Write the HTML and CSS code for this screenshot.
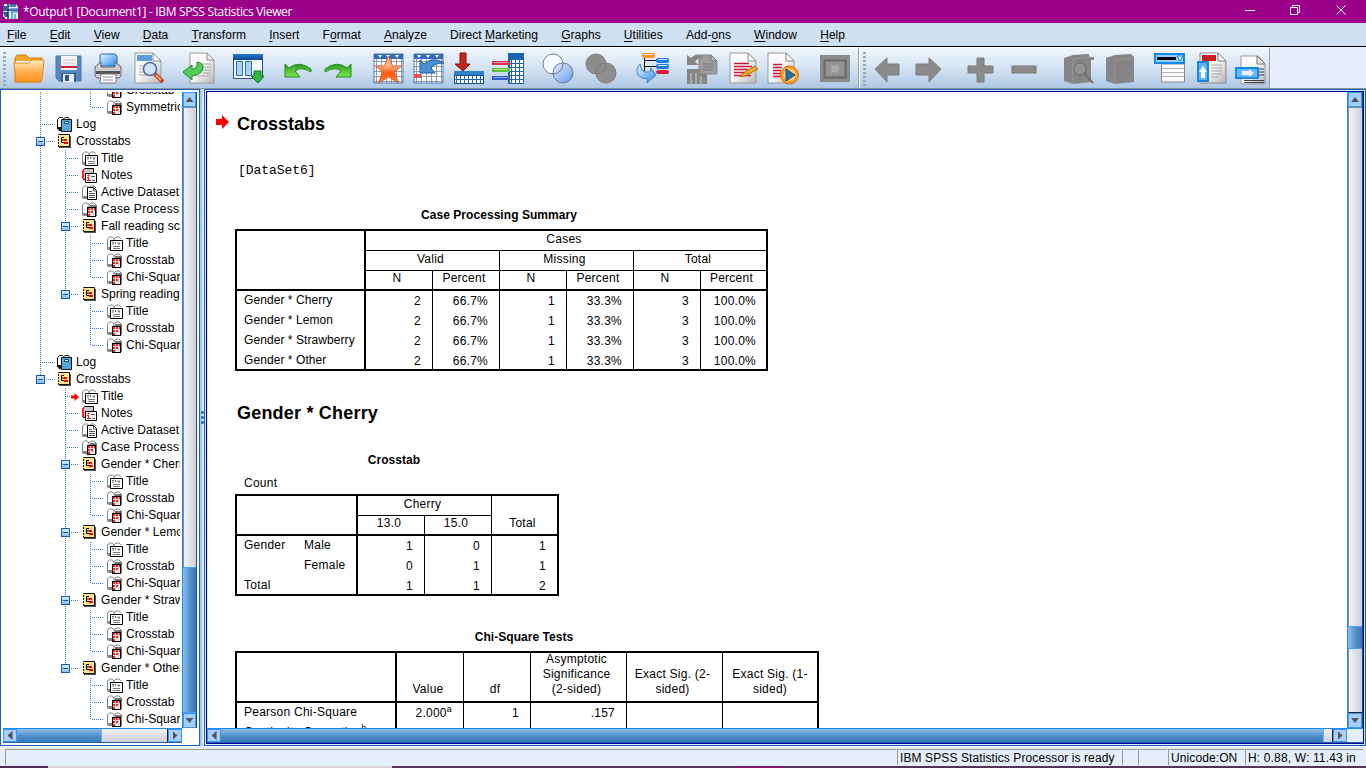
FILE: index.html
```html
<!DOCTYPE html>
<html lang="en">
<head>
<meta charset="utf-8">
<title>*Output1 [Document1] - IBM SPSS Statistics Viewer</title>
<link rel="stylesheet" href="styles.css">
</head>
<body>
<svg class="defs" width="0" height="0" aria-hidden="true">
  <defs>
    <linearGradient id="gOrange" x2="0" y2="1"><stop offset="0" stop-color="#fff0c8"/><stop offset=".5" stop-color="#ffb050"/><stop offset="1" stop-color="#ff9420"/></linearGradient>
    <linearGradient id="gBlue" x2="0" y2="1"><stop offset="0" stop-color="#2a78cc"/><stop offset="1" stop-color="#0c4a98"/></linearGradient>
    <linearGradient id="gSky" x2="1" y2="1"><stop offset="0" stop-color="#e8f6ff"/><stop offset="1" stop-color="#2a8cf0"/></linearGradient>
    <linearGradient id="gPaper" x2="1" y2="1"><stop offset="0" stop-color="#fff"/><stop offset=".5" stop-color="#f6f6f6"/><stop offset="1" stop-color="#b4b4b4"/></linearGradient>
    <linearGradient id="gGreen" x2="0" y2="1"><stop offset="0" stop-color="#2f9a20"/><stop offset="1" stop-color="#7ce850"/></linearGradient>
    <linearGradient id="gStar" x2="0" y2="1"><stop offset="0" stop-color="#ffd8b8"/><stop offset=".45" stop-color="#ffa070"/><stop offset=".6" stop-color="#ff5a10"/><stop offset="1" stop-color="#ff8030"/></linearGradient>
    <linearGradient id="gVenn" x2="1" y2="1"><stop offset="0" stop-color="#e6efff"/><stop offset="1" stop-color="#5f95ee"/></linearGradient>
    <pattern id="cells" width="5" height="5" patternUnits="userSpaceOnUse"><rect width="5" height="5" fill="#8f9aab"/><rect width="4" height="4" fill="#fff"/></pattern>
    <pattern id="cellsBlue" width="4" height="4" patternUnits="userSpaceOnUse"><rect width="4" height="4" fill="#1b66ae"/><rect width="3" height="3" fill="#fff"/></pattern>
    <symbol id="t-book" viewBox="0 0 17 17"><path d="M1 14V4l2-2h4l1 1 1-1h4l2 2v10H1z" fill="#fff"/><path d="M1.500 14V4l2-2h3l1.500 2v10M8 4l2-2h3l2 2M1 14h7" fill="none" stroke="#858585"/><path d="M1 12h6v3H3z" fill="#858585"/></symbol>
    <symbol id="i-title" viewBox="0 0 17 17"><use href="#t-book"/><path d="M4.500 5.500h12v10h-12z" fill="#fff" stroke="#000"/><path d="M6 7.500h2M7 8v2M9.500 7v2M11 8.500l1-1 1 2 1-2M7 11.500h7M7 13.500h7" stroke="#777" fill="none"/></symbol>
    <symbol id="i-table" viewBox="0 0 17 17"><use href="#t-book"/><path d="M9 4h7v11H9z" fill="#777"/><path d="M6 6h9v10H6z" fill="#000"/><path d="M7 7h7v8H7z" fill="#d8d8d8"/><path d="M7 7h2v2H7zM10 7h2v2h-2zM13 7h1v2h-1zM7 10h2v2H7zM7 13h2v2H7zM10 10h2v2h-2z" fill="#ff2020"/><path d="M10 13h2v2h-2zM13 10h1v2h-1zM13 13h1v2h-1z" fill="#fff"/></symbol>
    <symbol id="i-notes" viewBox="0 0 17 17"><path d="M2.500 12.500V2.500l1-1h9v10z" fill="#c8c8c8" stroke="#000"/><path d="M1 3h2v9H1z" fill="#f22"/><path d="M4.500 6.500h11v9h-11z" fill="#fff" stroke="#000"/><path d="M7 8h1v1H7zM6 10.500h1.500V13M6 13.500h4" stroke="red" fill="none"/><path d="M10 9.500h4M11 13.500h3" stroke="#555"/></symbol>
    <symbol id="i-data" viewBox="0 0 17 17"><use href="#t-book"/><path d="M6.500 3.500h6l3 3v9h-9z" fill="#fff" stroke="#000"/><path d="M12.500 4v3h3M8 7.500h3M8 9.500h6M8 11.500h6M8 13.500h6" stroke="#555" fill="none"/></symbol>
    <symbol id="i-log" viewBox="0 0 17 17"><path d="M1.500 13V3.500l2-2h3l1 1 2-1h3l1 2" fill="#fff" stroke="#111"/><path d="M1 11h4v4H3z" fill="#111"/><path d="M5.500 3.500h10v12h-10z" fill="#55a8dc" stroke="#111"/><path d="M8.500 5.500h4v2h-4z" fill="#fff" stroke="#124b80"/></symbol>
    <symbol id="i-out" viewBox="0 0 17 17"><path d="M3 3h12v12H3z" fill="#555"/><path d="M2.500 1.500h11v12h-11z" fill="#ffe48c" stroke="#111"/><path d="M2 2v12" stroke="#fff3c0" stroke-dasharray="1 2" stroke-width="2"/><path d="M8 4.500H5.500v5H8M6 7h2" stroke="#000" fill="none"/><path d="M8 6h3v2H8zM8 9h4v2H8z" fill="red"/></symbol>
    <symbol id="page" viewBox="0 0 34 34"><path d="M1 1h18l8 8v22H1z" fill="url(#gPaper)" stroke="#9a9a9a"/><path d="M19 1v8h8z" fill="#fff" stroke="#888"/></symbol>
  </defs>
</svg>

<header class="titlebar">
  <svg class="app" viewBox="0 0 17 17"><path d="M2 1h12l2 3v12H4L1 13z" fill="#e8f4fa"/><path d="M1 3h4v3H1zM1 9h5v5H3zM8 1h6v3H8z" fill="#315b99"/><path d="M6 1v15M1 7h15" stroke="#123668" stroke-width="1.500"/><path d="M8 6h8M9 9h7M10 9v7M13 11v5M7 3h7" stroke="#4e91c2" stroke-width="1.500"/></svg>
  <span class="caption">*Output1 [Document1] - IBM SPSS Statistics Viewer</span>
  <svg class="winbtns" viewBox="0 0 130 23"><g fill="none" stroke="#fff"><path d="M9 10.500h10M54.500 7.500h7v7h-7zM56.500 7V5.500h7v7H62M100.500 5.500l9 9M109.500 5.500l-9 9"/></g></svg>
</header>

<nav class="menubar"><span><u>F</u>ile</span><span><u>E</u>dit</span><span><u>V</u>iew</span><span><u>D</u>ata</span><span><u>T</u>ransform</span><span><u>I</u>nsert</span><span>F<u>o</u>rmat</span><span><u>A</u>nalyze</span><span>Direct <u>M</u>arketing</span><span><u>G</u>raphs</span><span><u>U</u>tilities</span><span>Add-<u>o</u>ns</span><span><u>W</u>indow</span><span><u>H</u>elp</span></nav>

<div class="toolbars">
  <div class="bar main">
    <svg viewBox="0 0 34 34"><path d="M3 30V6l2-3h9l3 3h13v5l-1 19z" fill="#f5a524" stroke="#c98012"/><path d="M4 9h25v5H4z" fill="#fff"/><path d="M2 11h15l3-3h12l-2 20-3 2H4z" fill="url(#gOrange)" stroke="#e08820"/></svg>
    <svg viewBox="0 0 34 34"><path d="M2 4h25v25H5l-3-3z" fill="#5488be" stroke="#4478b0"/><path d="M7 4h16v14H7z" fill="#f2f2f4"/><path d="M7 14h16v2H7z" fill="#d0203c"/><path d="M9 8h12M9 11h12" stroke="#c8c8c8"/><path d="M7 21h15v9H7z" fill="#2f6099"/><path d="M9 22h11v8H9z" fill="#eee"/><path d="M11 23h4v6h-4z" fill="#24589a"/></svg>
    <svg viewBox="0 0 34 34"><path d="M8 2h14l2 2v10H7V3z" fill="url(#gSky)" stroke="#236bb5"/><path d="M4 13l4-3v5h14v-5l4 3 2 2v9l-2 2H4l-2-2v-9z" fill="#cfcfcf" stroke="#666"/><path d="M3 19h24v3H3z" fill="#555"/><path d="M8 22h15v9H7z" fill="#fff" stroke="#777"/><path d="M10 25h10M10 28h10" stroke="#88b"/></svg>
    <svg viewBox="0 0 34 34"><use href="#page"/><path d="M3 3h15v6H3z" fill="#5a9de0"/><path d="M5 14h7M5 17h5M5 20h5M5 23h7" stroke="#aaa"/><path d="M21 22l8 8" stroke="#b34a18" stroke-width="4"/><path d="M22 23l5 5" stroke="#ff9a70" stroke-width="2"/><circle cx="16" cy="17" r="6.500" fill="#cfe2ff" fill-opacity=".9" stroke="#5068a8" stroke-width="1.500"/></svg>
    <svg viewBox="0 0 34 34"><path d="M8 1h17l7 7v23H8z" fill="url(#gPaper)" stroke="#9a9a9a"/><path d="M25 1v7h7z" fill="#fff" stroke="#888"/><path d="M20 12h9M20 15h9M20 18h9M20 21h9M15 24h13" stroke="#aaa"/><path d="M1 20l9-7v4q6 0 5-7 6 1 6 5-1 8-11 9v4z" fill="#55cc58" stroke="#178a2c"/></svg>
    <svg viewBox="0 0 34 34"><path d="M1.500 2.500h29v24h-29z" fill="#f5faff" stroke="#2b4d88"/><path d="M1 2h30v6H1z" fill="url(#gBlue)"/><path d="M4.500 9.500h6v14h-6zM13.500 9.500h6v14h-6z" fill="#a8d4fa" stroke="#2a6fb4"/><path d="M22 19h7v5h3l-6 7-7-7h3z" fill="#2eb838" stroke="#0d7820"/></svg>
    <svg viewBox="0 0 34 34"><path d="M2 12l4 4q10-8 22 1v3q-10-6-16-1l5 6H2z" fill="url(#gGreen)" stroke="#218c26"/></svg>
    <svg viewBox="0 0 34 34"><path d="M27 12l-4 4Q13 8 1 17v3q10-6 16-1l-5 6h15z" fill="url(#gGreen)" stroke="#218c26"/></svg>
    <svg viewBox="0 0 34 34"><path d="M2 2h29v29H2z" fill="url(#cells)" stroke="#527fc0"/><path d="M2 2h29v5H2z" fill="#3269c2"/><path d="M6 3l2 3 2-3M14 3l2 3 2-3M23 3l2 3 2-3" fill="#fff"/><path d="M16.500 4l4 10h9l-7 6 4 11-10-6-10 6 4-11-7-6h9z" fill="url(#gStar)" stroke="#d96524"/></svg>
    <svg viewBox="0 0 34 34"><path d="M2 2h29v29H2z" fill="url(#cells)" stroke="#527fc0"/><path d="M2 2h29v5H2z" fill="#3269c2"/><path d="M5 3l2 3 2-3M14 3l2 3 2-3M23 3l2 3 2-3" fill="#fff"/><path d="M2 22h7v4H2z" fill="#f24b54"/><path d="M8 8l4 4q9-8 20-1-10 0-13 5l4 5H8z" fill="#488ed4" stroke="#235c9e"/></svg>
    <svg viewBox="0 0 34 34"><path d="M1 19h30v13H1z" fill="#174e92"/><path d="M2 24h28v7H2z" fill="url(#cellsBlue)"/><path d="M1 19h30v4H1z" fill="#2f81cc"/><path d="M7 1h6v11h4L10 19l-8-7h5z" fill="#c8241c" stroke="#7c1010"/></svg>
    <svg viewBox="0 0 34 34"><path d="M16 1h16v31H16z" fill="#1b62b0"/><path d="M18 7h13v24H18z" fill="url(#cellsBlue)"/><path d="M0 9h18v4H0z" fill="#d83252"/><path d="M0 16h18v4H0z" fill="#5fc436"/><path d="M0 24h18v4H0z" fill="#315dd0"/><path d="M2 10.500h14M2 17.500h14M2 25.500h14" stroke="#fff" stroke-opacity=".45"/></svg>
    <svg viewBox="0 0 34 34"><circle cx="12" cy="12" r="10" fill="#f4f9ff" stroke="#7a8290"/><circle cx="22" cy="21" r="10" fill="url(#gVenn)" fill-opacity=".9" stroke="#6878a0"/><path d="M12 22a10 10 0 0 0 10-10" fill="none" stroke="#6878a0"/></svg>
    <svg viewBox="0 0 34 34"><circle cx="12" cy="12" r="10" fill="#8c8c8c" stroke="#808080"/><circle cx="22" cy="21" r="10" fill="#8e8e8e" stroke="#7b7b7b"/><path d="M22 12a10 10 0 0 1-10 10" fill="none" stroke="#777"/></svg>
    <svg viewBox="0 0 34 34"><path d="M8.500 5v14M8 8.500h13M8 14.500h13" stroke="#111" fill="none"/><rect x="6" y="1" width="13" height="5" rx="2" fill="#ff9520"/><rect x="20" y="6" width="13" height="5" rx="2" fill="#1c7cf0"/><rect x="20" y="12" width="13" height="5" rx="2" fill="#1c7cf0"/><rect x="20" y="18" width="13" height="4" rx="2" fill="#dc1c3c"/><path d="M8 2.500h9M22 7.500h9M22 13.500h9" stroke="#cfe4ff"/><path d="M4 12Q-1 18 2 23q3 4 10 4l-1 4 9-8-5-7-1 4q-6 1-8-2-1-2-2-6z" fill="url(#gSky)" stroke="#3a84d2"/></svg>
    <svg viewBox="0 0 34 34"><path d="M14 3h12l6 6v13H14z" fill="#9d9d9d" stroke="#888"/><path d="M26 3v6h6z" fill="#b8b8b8" stroke="#777"/><path d="M18 12h10M18 15h10M18 18h10" stroke="#747474"/><path d="M2 3l4 3q7-7 12 0-6 0-8 4l4 3H2z" fill="#858585"/><path d="M2 17h13v5h7v10H2z" fill="#858585"/><path d="M6 21v11M11 21v11M16 24v8" stroke="#aaa" stroke-width="2"/></svg>
    <svg viewBox="0 0 34 34"><use href="#page"/><path d="M5 11.500h15M5 14.500h18M5 17.500h14M5 20.500h12M5 23.500h17" stroke="#d41435" stroke-width="1.500"/><path d="M13 22l13-8 3 3-13 7-5 1z" fill="#ffac25" stroke="#b06d14"/></svg>
    <svg viewBox="0 0 34 34"><use href="#page"/><path d="M6 12.500h9M6 15.500h9M6 18.500h8M6 21.500h8M6 24.500h8" stroke="#d41435" stroke-width="1.500"/><circle cx="22.500" cy="23" r="9" fill="#ff9d24" stroke="#c37418"/><circle cx="22.500" cy="23" r="6" fill="#ffd18a"/><path d="M19 17l9 6-9 6z" fill="#2272aa" stroke="#16507e"/></svg>
    <svg viewBox="0 0 34 34"><path d="M1 3h30v27H1z" fill="#8b8b8b"/><path d="M5.500 8.500h21v17h-21z" fill="#929292" stroke="#686868" stroke-width="2"/><path d="M16 11l1 3 3-1-1 3 3 1-3 1 1 3-3-1-1 3-1-3-3 1 1-3-3-1 3-1-1-3 3 1z" fill="#aaa"/></svg>
  </div>
  <div class="bar nav">
    <svg viewBox="0 0 34 34"><path d="M1 17L13 6v6h12v11H13v7z" fill="#8a8a8a" stroke="#7d7d7d"/></svg>
    <svg viewBox="0 0 34 34"><path d="M26 17L14 6v6H1v11h13v7z" fill="#8a8a8a" stroke="#7d7d7d"/></svg>
    <svg viewBox="0 0 34 34"><path d="M10 6h7v8h9v7h-9v9h-7v-9H1v-7h9z" fill="#8a8a8a" stroke="#7d7d7d"/></svg>
    <svg viewBox="0 0 34 34"><path d="M1 14h24v7H1z" fill="#8a8a8a" stroke="#7d7d7d"/></svg>
    <svg viewBox="0 0 34 34"><path d="M1 6l9-3 16-1v3h5v3h-3v22l-18 2-9-3z" fill="#858585"/><path d="M10 7v24M10 7l18-2" stroke="#989898"/><circle cx="17" cy="17" r="6" fill="#929292" stroke="#686868"/><path d="M21 21l9 10" stroke="#707070" stroke-width="2"/></svg>
    <svg viewBox="0 0 34 34"><path d="M1 6l9-3 16-1 3 3v25l-19 2-9-3z" fill="#858585"/><path d="M10 8v23M10 8l18-2" stroke="#989898"/></svg>
    <svg viewBox="0 0 34 34"><path d="M7.500 12h23v18h-23z" fill="#fafafa" stroke="#888"/><path d="M8 16.500h22M8 20.500h22M8 24.500h22" stroke="#b4b4b4"/><path d="M1 2h29v9H1z" fill="#8fd0ff" stroke="#1688ec" stroke-width="2"/><path d="M3 5h19v3H3z" fill="#000"/><path d="M23 4h6l-3 5z" fill="#eaf6ff" stroke="#1688ec"/></svg>
    <svg viewBox="0 0 34 34"><path d="M4 1h18l8 8v22H4z" fill="url(#gPaper)" stroke="#888"/><path d="M6 3h14v6H6z" fill="#c91d1d"/><path d="M22 1v8h8z" fill="#fff" stroke="#777"/><path d="M15 13h11M15 16h11M15 19h11M15 22h11M15 25h7" stroke="#aaa"/><path d="M2 10h10v19H2z" fill="#5eb6ff" stroke="#1785ea" stroke-width="2"/><path d="M7 14l4 6H9v6H5v-6H3z" fill="#fff"/></svg>
    <svg viewBox="0 0 34 34"><path d="M6 4h17l7 8v20H6z" fill="url(#gPaper)" stroke="#999"/><path d="M22 4v8h8z" fill="#eee" stroke="#777"/><path d="M24 17h5M24 20h5M24 23h5M9 28.500h20M9 30.500h20" stroke="#444"/><path d="M1 16h22v10H1z" fill="#68b8ff" stroke="#1688ec" stroke-width="2"/><path d="M7 19h7v-2l5 4-5 4v-2H7z" fill="#e8f5ff"/></svg>
  </div>
</div>

<main class="work">
  <aside class="outline">
    <div class="treewrap">
      <div class="tree">
        <div class="row"><i class="v"></i><i></i><i class="t"></i><svg><use href="#i-table"/></svg>Crosstab</div>
        <div class="row"><i class="v"></i><i></i><i class="l"></i><svg><use href="#i-table"/></svg>Symmetric Measures</div>
        <div class="row"><i class="t"></i><svg><use href="#i-log"/></svg>Log</div>
        <div class="row"><i class="t x"></i><svg><use href="#i-out"/></svg>Crosstabs</div>
        <div class="row"><i class="v"></i><i class="t"></i><svg><use href="#i-title"/></svg>Title</div>
        <div class="row"><i class="v"></i><i class="t"></i><svg><use href="#i-notes"/></svg>Notes</div>
        <div class="row"><i class="v"></i><i class="t"></i><svg><use href="#i-data"/></svg>Active Dataset</div>
        <div class="row wide"><i class="v"></i><i class="t"></i><svg><use href="#i-table"/></svg>Case Processing Summary</div>
        <div class="row"><i class="v"></i><i class="t x"></i><svg><use href="#i-out"/></svg>Fall reading score</div>
        <div class="row"><i class="v"></i><i class="v"></i><i class="t"></i><svg><use href="#i-title"/></svg>Title</div>
        <div class="row"><i class="v"></i><i class="v"></i><i class="t"></i><svg><use href="#i-table"/></svg>Crosstab</div>
        <div class="row"><i class="v"></i><i class="v"></i><i class="l"></i><svg><use href="#i-table"/></svg>Chi-Square Tests</div>
        <div class="row"><i class="v"></i><i class="l x"></i><svg><use href="#i-out"/></svg>Spring reading score</div>
        <div class="row"><i class="v"></i><i></i><i class="t"></i><svg><use href="#i-title"/></svg>Title</div>
        <div class="row"><i class="v"></i><i></i><i class="t"></i><svg><use href="#i-table"/></svg>Crosstab</div>
        <div class="row"><i class="v"></i><i></i><i class="l"></i><svg><use href="#i-table"/></svg>Chi-Square Tests</div>
        <div class="row"><i class="t"></i><svg><use href="#i-log"/></svg>Log</div>
        <div class="row"><i class="l x"></i><svg><use href="#i-out"/></svg>Crosstabs</div>
        <div class="row"><i></i><i class="t cur"></i><svg><use href="#i-title"/></svg>Title</div>
        <div class="row"><i></i><i class="t"></i><svg><use href="#i-notes"/></svg>Notes</div>
        <div class="row"><i></i><i class="t"></i><svg><use href="#i-data"/></svg>Active Dataset</div>
        <div class="row wide"><i></i><i class="t"></i><svg><use href="#i-table"/></svg>Case Processing Summary</div>
        <div class="row"><i></i><i class="t x"></i><svg><use href="#i-out"/></svg>Gender * Cherry</div>
        <div class="row"><i></i><i class="v"></i><i class="t"></i><svg><use href="#i-title"/></svg>Title</div>
        <div class="row"><i></i><i class="v"></i><i class="t"></i><svg><use href="#i-table"/></svg>Crosstab</div>
        <div class="row"><i></i><i class="v"></i><i class="l"></i><svg><use href="#i-table"/></svg>Chi-Square Tests</div>
        <div class="row"><i></i><i class="t x"></i><svg><use href="#i-out"/></svg>Gender * Lemon</div>
        <div class="row"><i></i><i class="v"></i><i class="t"></i><svg><use href="#i-title"/></svg>Title</div>
        <div class="row"><i></i><i class="v"></i><i class="t"></i><svg><use href="#i-table"/></svg>Crosstab</div>
        <div class="row"><i></i><i class="v"></i><i class="l"></i><svg><use href="#i-table"/></svg>Chi-Square Tests</div>
        <div class="row"><i></i><i class="t x"></i><svg><use href="#i-out"/></svg>Gender * Strawberry</div>
        <div class="row"><i></i><i class="v"></i><i class="t"></i><svg><use href="#i-title"/></svg>Title</div>
        <div class="row"><i></i><i class="v"></i><i class="t"></i><svg><use href="#i-table"/></svg>Crosstab</div>
        <div class="row"><i></i><i class="v"></i><i class="l"></i><svg><use href="#i-table"/></svg>Chi-Square Tests</div>
        <div class="row"><i></i><i class="l x"></i><svg><use href="#i-out"/></svg>Gender * Other</div>
        <div class="row"><i></i><i></i><i class="t"></i><svg><use href="#i-title"/></svg>Title</div>
        <div class="row"><i></i><i></i><i class="t"></i><svg><use href="#i-table"/></svg>Crosstab</div>
        <div class="row"><i></i><i></i><i class="l"></i><svg><use href="#i-table"/></svg>Chi-Square Tests</div>
      </div>
      <div class="vscroll"><b class="up"></b><span class="gray"></span><span class="blue tree-blue"></span><b class="down"></b></div>
    </div>
    <div class="hscroll tree-h"><b class="left"></b><span class="blue"></span><span class="gray"></span><b class="right"></b></div>
  </aside>
  <div class="splitter"><i></i><i></i><i></i></div>
  <section class="viewer">
    <div class="viewwrap">
      <div class="doc">
        <div class="heading first"><svg class="pointer" viewBox="0 0 13 14"><path d="M0 4h6V0l7 7-7 7v-4H0z" fill="#ff0000"/></svg><h1>Crosstabs</h1></div>
        <pre>[DataSet6]</pre>
        <h2 class="cap1">Case Processing Summary</h2>
        <div class="pivot p1">
          <div class="corner span3"></div><div class="hd c6">Cases</div>
          <div class="hd c2 r1">Valid</div><div class="hd c2 r1">Missing</div><div class="hd c2">Total</div>
          <div class="hd k r1">N</div><div class="hd k r1">Percent</div><div class="hd k r1">N</div><div class="hd k r1">Percent</div><div class="hd k r1">N</div><div class="hd k">Percent</div>
          <div class="lb">Gender * Cherry</div><div class="n">2</div><div class="n">66.7%</div><div class="n">1</div><div class="n">33.3%</div><div class="n">3</div><div class="n e">100.0%</div>
          <div class="lb">Gender * Lemon</div><div class="n">2</div><div class="n">66.7%</div><div class="n">1</div><div class="n">33.3%</div><div class="n">3</div><div class="n e">100.0%</div>
          <div class="lb">Gender * Strawberry</div><div class="n">2</div><div class="n">66.7%</div><div class="n">1</div><div class="n">33.3%</div><div class="n">3</div><div class="n e">100.0%</div>
          <div class="lb">Gender * Other</div><div class="n">2</div><div class="n">66.7%</div><div class="n">1</div><div class="n">33.3%</div><div class="n">3</div><div class="n e">100.0%</div>
        </div>
        <div class="heading second"><h1>Gender * Cherry</h1></div>
        <h2 class="cap2">Crosstab</h2>
        <p class="count">Count</p>
        <div class="pivot p2">
          <div class="corner c2 span2"></div><div class="hd c2 r1">Cherry</div><div class="hd k span2 low"><span>Total</span></div>
          <div class="hd k r1">13.0</div><div class="hd k r1">15.0</div>
          <div class="lb plain">Gender</div><div class="lb">Male</div><div class="n">1</div><div class="n">0</div><div class="n e">1</div>
          <div class="lb plain"></div><div class="lb">Female</div><div class="n">0</div><div class="n">1</div><div class="n e">1</div>
          <div class="lb c2">Total</div><div class="n">1</div><div class="n">1</div><div class="n e">2</div>
        </div>
        <h2 class="cap3">Chi-Square Tests</h2>
        <div class="pivot p3">
          <div class="corner"></div><div class="hd k r1 low"><span>Value</span></div><div class="hd k r1 low"><span>df</span></div><div class="hd k r1 low"><span>Asymptotic<br>Significance<br>(2-sided)</span></div><div class="hd k r1 low"><span>Exact Sig. (2-<br>sided)</span></div><div class="hd k low last"><span>Exact Sig. (1-<br>sided)</span></div>
          <div class="lb">Pearson Chi-Square</div><div class="n">2.000<sup>a</sup></div><div class="n">1</div><div class="n">.157</div><div class="n"></div><div class="n e"></div>
          <div class="lb">Continuity Correction<sup>b</sup></div><div class="n">.000</div><div class="n">1</div><div class="n">1.000</div><div class="n"></div><div class="n e"></div>
        </div>
      </div>
      <div class="vscroll"><b class="up"></b><span class="gray"></span><span class="blue view-blue"></span><span class="gray tail"></span><b class="down"></b></div>
    </div>
    <div class="hscroll"><b class="left"></b><span class="blue"></span><span class="gray"></span><b class="right"></b></div>
  </section>
</main>

<footer class="status">
  <span class="msg"></span><span class="proc">IBM SPSS Statistics Processor is ready</span><span class="s1"></span><span class="s2"></span><span class="uni">Unicode:ON</span><span class="hw">H: 0.88, W: 11.43 in</span>
</footer>
<div class="edge"></div>
</body>
</html>
```

FILE: styles.css
```css
*, *::before, *::after { box-sizing: border-box; }
body {
  margin: 0; width: 1366px; height: 768px; overflow: hidden;
  display: flex; flex-direction: column;
  font: 12px/17px "Liberation Sans", Arial, sans-serif;
  color: #000; background: #e4effb;
}
.defs { position: absolute; }
svg { display: block; flex: none; }

.titlebar { height: 23px; flex: none; background: #9b008a; display: flex; align-items: center; padding-left: 2px; color: #fff; }
.app { width: 17px; height: 17px; }
.caption { margin-left: 4px; font: 12px/22px "Open Sans", "Noto Sans", sans-serif; letter-spacing: -.33px; white-space: nowrap; }
.winbtns { width: 130px; height: 23px; margin-left: auto; }

.menubar { height: 24px; flex: none; background: #cfe0f0; border-bottom: 1px solid #000; display: flex; gap: 23.200px; padding-left: 7px; line-height: 24px; white-space: nowrap; letter-spacing: .03px; }
.menubar u { text-underline-offset: 2px; }

.toolbars { height: 42px; flex: none; display: flex; border-bottom: 1px solid #8f9499; }
.bar { display: grid; background: linear-gradient(#f0f6fd, #d4e3f3 50%, #aec8e4); padding-top: 4px; border-top: 1px solid #fff; border-right: 1px solid #9aa0a6; position: relative; }
.bar svg { width: 34px; height: 34px; }
.bar::before { content: ""; position: absolute; left: 3px; top: 2px; width: 3px; height: 37px; background: repeating-linear-gradient(transparent 0 2px, #9aa9b8 2px 4px); }
.main { width: 859px; padding-left: 12px; grid-template-columns: 42px 39px 41px 48px 50px 51px 41px 48px 40px 41px 39px 49px 43px 52px 49px 44px 38px 52px 38px; }
.nav { width: 411px; padding-left: 14px; grid-template-columns: 41px 52px 44px 52px 42px 49px 42px 39px 34px; border-left: 1px solid #fff; }

.work { height: 657px; flex: none; display: flex; }
.outline { width: 200px; border: 1px solid #1b62b5; background: #fff; display: flex; flex-direction: column; padding: 2px; }
.treewrap { height: 636px; display: flex; gap: 2px; }
.tree { width: 177px; overflow: hidden; padding-left: 37px; }
.row { height: 17px; width: 300px; display: flex; align-items: center; white-space: nowrap; letter-spacing: .05px; }
.row.wide { letter-spacing: .3px; }
.row:first-child { margin-top: -10px; }
.row svg { width: 17px; height: 17px; margin-right: 3px; }
.row i { width: 25px; height: 17px; flex: none; position: relative; }
.row i.t, .row i.l { width: 16px; }
.row i.v, .row i.t, .row i.l {
  --v: linear-gradient(#2d7acb 50%, transparent 50%);
  --h: linear-gradient(90deg, #2d7acb 50%, transparent 50%);
  background-repeat: repeat-y; background-image: var(--v); background-size: 1px 2px;
}
.row i.l { background-image: linear-gradient(#2d7acb 50%, transparent 50%); background-clip: content-box; padding-bottom: 8px; }
.row i.t::after, .row i.l::after { content: ""; position: absolute; left: 1px; top: 8px; width: 13px; height: 1px; background: var(--h) 1px 0 / 2px 1px; }
.row:nth-child(even) i { background-position-y: 1px; }
.row i.x::before {
  content: ""; position: absolute; z-index: 1; left: -4px; top: 4px; width: 9px; height: 9px; border: 1px solid #1659ac;
  background: linear-gradient(#1659ac, #1659ac) center / 5px 1px no-repeat, linear-gradient(#d8ecff, #88bbec);
}
.row i.cur::before { content: ""; position: absolute; z-index: 1; left: 6px; top: 5px; width: 8px; height: 8px; background: #f00; clip-path: polygon(0 30%, 45% 30%, 45% 0, 100% 50%, 45% 100%, 45% 70%, 0 70%); }

.vscroll { width: 15px; display: flex; flex-direction: column; border-left: 1px solid #1d8bf5; border-right: 1px solid #164c88; }
.vscroll b, .hscroll b { flex: none; background: #a6cffc; border: 1px solid #3a98f2; display: flex; align-items: center; justify-content: center; }
.vscroll b { height: 15px; }
.hscroll b { width: 14px; }
.vscroll b::before, .hscroll b::before { content: ""; flex: none; width: 8px; height: 5px; background: #50555c; clip-path: polygon(50% 0, 100% 100%, 0 100%); }
.vscroll b.down::before { clip-path: polygon(0 0, 100% 0, 50% 100%); }
.hscroll b::before { width: 5px; height: 9px; clip-path: polygon(100% 0, 100% 100%, 0 50%); }
.hscroll b.right::before { clip-path: polygon(0 0, 100% 50%, 0 100%); }
.vscroll .gray { flex: 1; background: linear-gradient(90deg, #f2f2f8, #cfcfda); border-left: 1px solid #88898f; border-top: 1px solid #88898f; }
.vscroll .blue { background: linear-gradient(90deg, #8fbde8, #4a8bc9 60%, #3a79b9); border-top: 1px solid #48a0f4; border-bottom: 1px solid #48a0f4; }
.tree-blue { height: 146px; }
.view-blue { height: 23px; }
.vscroll .tail { flex: none; height: 64px; border-top: 0; border-bottom: 1px solid #222; }
.hscroll { height: 15px; display: flex; border-top: 1px solid #1d8bf5; border-bottom: 1px solid #1c64ac; }
.hscroll .blue { flex: 1; background: linear-gradient(#8fbde8, #4a8bc9 60%, #3a79b9); }
.hscroll .gray { width: 10px; background: linear-gradient(#f0f0f6, #cfcfda); border-right: 1px solid #222; border-left: 1px solid #6bb0f0; }
.tree-h { width: 179px; }
.tree-h .gray { width: 67px; }

.splitter { width: 4px; background: linear-gradient(90deg, #8fc0ee, #b6d8f8 50%, #f4f9ff); display: flex; flex-direction: column; align-items: center; justify-content: center; gap: 2px; }
.splitter i { width: 3px; height: 3px; background: #4176ae; border-radius: 1px; }

.viewer { width: 1162px; border: 1px solid #1b62b5; background: #000099; padding: 2px; box-shadow: inset 0 0 0 1px #dcecfb; display: flex; flex-direction: column; }
.viewwrap { height: 636px; display: flex; background: #fff; border-left: 1px solid #dcecfb; }
.viewer .hscroll { background: #e4effb; padding-right: 16px; }
.doc { flex: 1; overflow: hidden; padding-left: 27px; letter-spacing: .25px; }
.viewwrap .vscroll { width: 16px; }
h1, h2, p, pre { margin: 0; }
.heading { display: flex; height: 24px; align-items: center; }
.heading.first { margin-left: -19px; margin-top: 20px; }
.pointer { width: 13px; height: 14px; margin-right: 8px; margin-top: -4px; }
h1 { font-size: 18px; line-height: 24px; font-weight: bold; letter-spacing: 0; padding-left: 2px; }
.first h1 { padding-left: 0; }
.second h1 { letter-spacing: .2px; }
pre { font: 13px/20px "Liberation Mono", "Courier New", monospace; letter-spacing: -.05px; margin: 25px 0 0 3px; }
h2 { font-size: 12px; line-height: 16px; font-weight: bold; text-align: center; letter-spacing: .05px; }
.cap1 { width: 528px; margin-top: 26px; }
.cap2 { width: 318px; margin-top: 27px; }
.cap3 { width: 578px; margin-top: 33px; }
.count { margin: 7px 0 2px 9px; }

.pivot { display: grid; border: 2px solid #000; line-height: 18px; }
.p1 { width: 533px; height: 142px; margin-top: 6px; grid-template-columns: 129px repeat(5, 67px) 65px; grid-template-rows: repeat(6, 20px) 18px; margin-bottom: 30px; }
.p2 { width: 324px; height: 102px; grid-template-columns: 60px 61px 67px 67px 65px; grid-template-rows: repeat(4, 20px) 18px; }
.p3 { width: 584px; height: 120px; margin-top: 6px; grid-template-columns: 160px 67px 67px 96px 96px 94px; grid-template-rows: 50px 20px 20px; }
.corner, .lb { border-right: 2px solid #000; }
.corner { border-bottom: 2px solid #000; }
.lb { padding-left: 7px; white-space: nowrap; }
.p1 .lb { letter-spacing: .07px; }
.lb.plain { border-right: 0; }
.span2 { grid-row: span 2; }
.span3 { grid-row: span 3; }
.c2 { grid-column: span 2; }
.c6 { grid-column: span 6; }
.hd { text-align: center; padding-right: 4px; line-height: 17px; border-bottom: 1px solid #000; }
.hd.r1 { border-right: 1px solid #000; padding-right: 4px; }
.hd.k { border-bottom: 2px solid #000; line-height: 15px; }
.low { display: flex; align-items: flex-end; justify-content: center; padding-bottom: 3px; }
.p3 .low { padding-bottom: 4px; }
.p3 .last { padding-right: 0; }
.n { text-align: right; padding-right: 11px; border-right: 1px solid #000; line-height: 20px; height: 20px; }
.n.e { border-right: 0; padding-right: 10px; }
.p2 .n.e { padding-right: 11px; }
.p1 .n:nth-last-child(-n+6), .p2 .n:nth-last-child(-n+3) { height: 18px; }
sup { font-size: 9px; line-height: 0; vertical-align: 5px; }

.status { height: 20px; flex: none; padding: 2px 3px 1px 5px; display: flex; gap: 1px; background: #e4effb; border-top: 1px solid #fff; line-height: 17px; white-space: nowrap; }
.status span { border-left: 1px solid #969ca2; border-top: 1px solid #969ca2; padding-left: 2px; }
.msg { width: 891px; }
.proc { width: 224px; letter-spacing: .1px; }
.s1 { width: 15px; }
.s2 { width: 29px; }
.uni { width: 76px; letter-spacing: .1px; }
.hw { flex: 1; letter-spacing: .15px; }
.edge { height: 2px; background: linear-gradient(90deg, #502a50 0 48px, #d8d4d8 48px 392px, #563158 392px 737px, #7b1773 737px 783px, #563158 783px); }
```
